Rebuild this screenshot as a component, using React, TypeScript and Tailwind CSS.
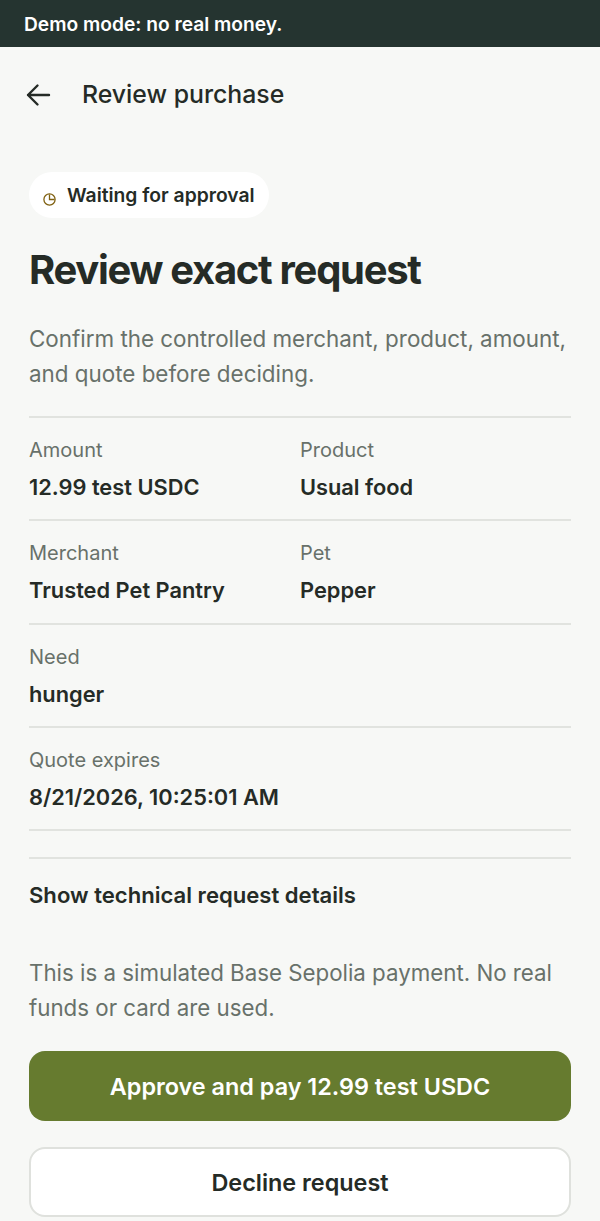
const font = "font-['Inter',sans-serif]";

function Field({ label, value }: { label: string; value: string }) {
  return (
    <div>
      <p className="text-[20px] leading-[26px] text-[#68716a]">{label}</p>
      <p className="mt-[9px] text-[21.800px] leading-[30px] font-semibold text-[#252b26]">{value}</p>
    </div>
  );
}

function Row({ children, cols }: { children: React.ReactNode; cols?: boolean }) {
  return (
    <div className={`border-b-2 border-[#e1e3df] pt-[19px] pb-[18px] h-[103.33px] ${cols ? "grid grid-cols-2 gap-0" : ""}`}>
      {children}
    </div>
  );
}

export default function App() {
  return (
    <div className={`${font} min-h-[1221px] h-[1221px] overflow-hidden bg-[#f7f8f6]`}>
      <div className="h-[47px] bg-[#253430] pl-[24px] flex items-center">
        <p className="mt-[1px] text-[19.200px] font-semibold text-white">Demo mode: no real money.</p>
      </div>

      <div className="flex items-center h-[94px] pl-[26px]">
        <svg className="mt-[1px]" width="25" height="26" viewBox="0 0 25 26" fill="none" stroke="#252b26" strokeWidth="2.400" strokeLinecap="round" strokeLinejoin="round">
          <path d="M23 13H2M11.500 3.500 2 13l9.500 9.500" />
        </svg>
        <h2 className="ml-[31px] mt-[1px] text-[24.800px] font-medium text-[#252b26]">Review purchase</h2>
      </div>

      <div className="px-[29px] pt-[31px]">
        <div className="inline-flex items-center h-[46px] w-[240px] rounded-full bg-white pl-[14px]">
          <svg className="mt-[8px]" width="13" height="13" viewBox="0 0 13 13" fill="none" stroke="#7f6010" strokeWidth="1.300">
            <circle cx="6.500" cy="6.500" r="5.600" />
            <path d="M6.500 1.500V6.500H11.500" />
          </svg>
          <span className="ml-[11px] mt-[1px] text-[19.300px] font-semibold text-[#252b26]">Waiting for approval</span>
        </div>

        <h1 className="mt-[25px] text-[40px] leading-[54px] font-bold tracking-[-1.300px] text-[#252b26]">Review exact request</h1>

        <p className="mt-[24px] text-[22.400px] leading-[35px] text-[#68716a]">
          Confirm the controlled merchant, product, amount, and quote before deciding.
        </p>

        <div className="mt-[25px] border-t-2 border-[#e1e3df]">
          <Row cols>
            <Field label="Amount" value="12.99 test USDC" />
            <Field label="Product" value="Usual food" />
          </Row>
          <Row cols>
            <Field label="Merchant" value="Trusted Pet Pantry" />
            <Field label="Pet" value="Pepper" />
          </Row>
          <Row>
            <Field label="Need" value="hunger" />
          </Row>
          <Row>
            <Field label="Quote expires" value="8/21/2026, 10:25:01 AM" />
          </Row>
        </div>

        <div className="mt-[26px] border-t-2 border-[#e1e3df] pt-[20px]">
          <p className="text-[22.100px] leading-[32px] font-semibold text-[#252b26]">Show technical request details</p>
        </div>

        <p className="mt-[44px] text-[22.300px] leading-[35px] text-[#68716a]">
          This is a simulated Base Sepolia payment. No real funds or card are used.
        </p>

        <button className="mt-[26px] block w-full h-[70px] rounded-[16px] bg-[#667b2f] text-[23.400px] font-semibold text-white">
          Approve and pay 12.99 test USDC
        </button>
        <button className="mt-[26px] block w-full h-[70px] rounded-[16px] bg-white border-2 border-[#dfe1dd] text-[23.400px] font-semibold text-[#252b26]">
          Decline request
        </button>
      </div>
    </div>
  );
}
